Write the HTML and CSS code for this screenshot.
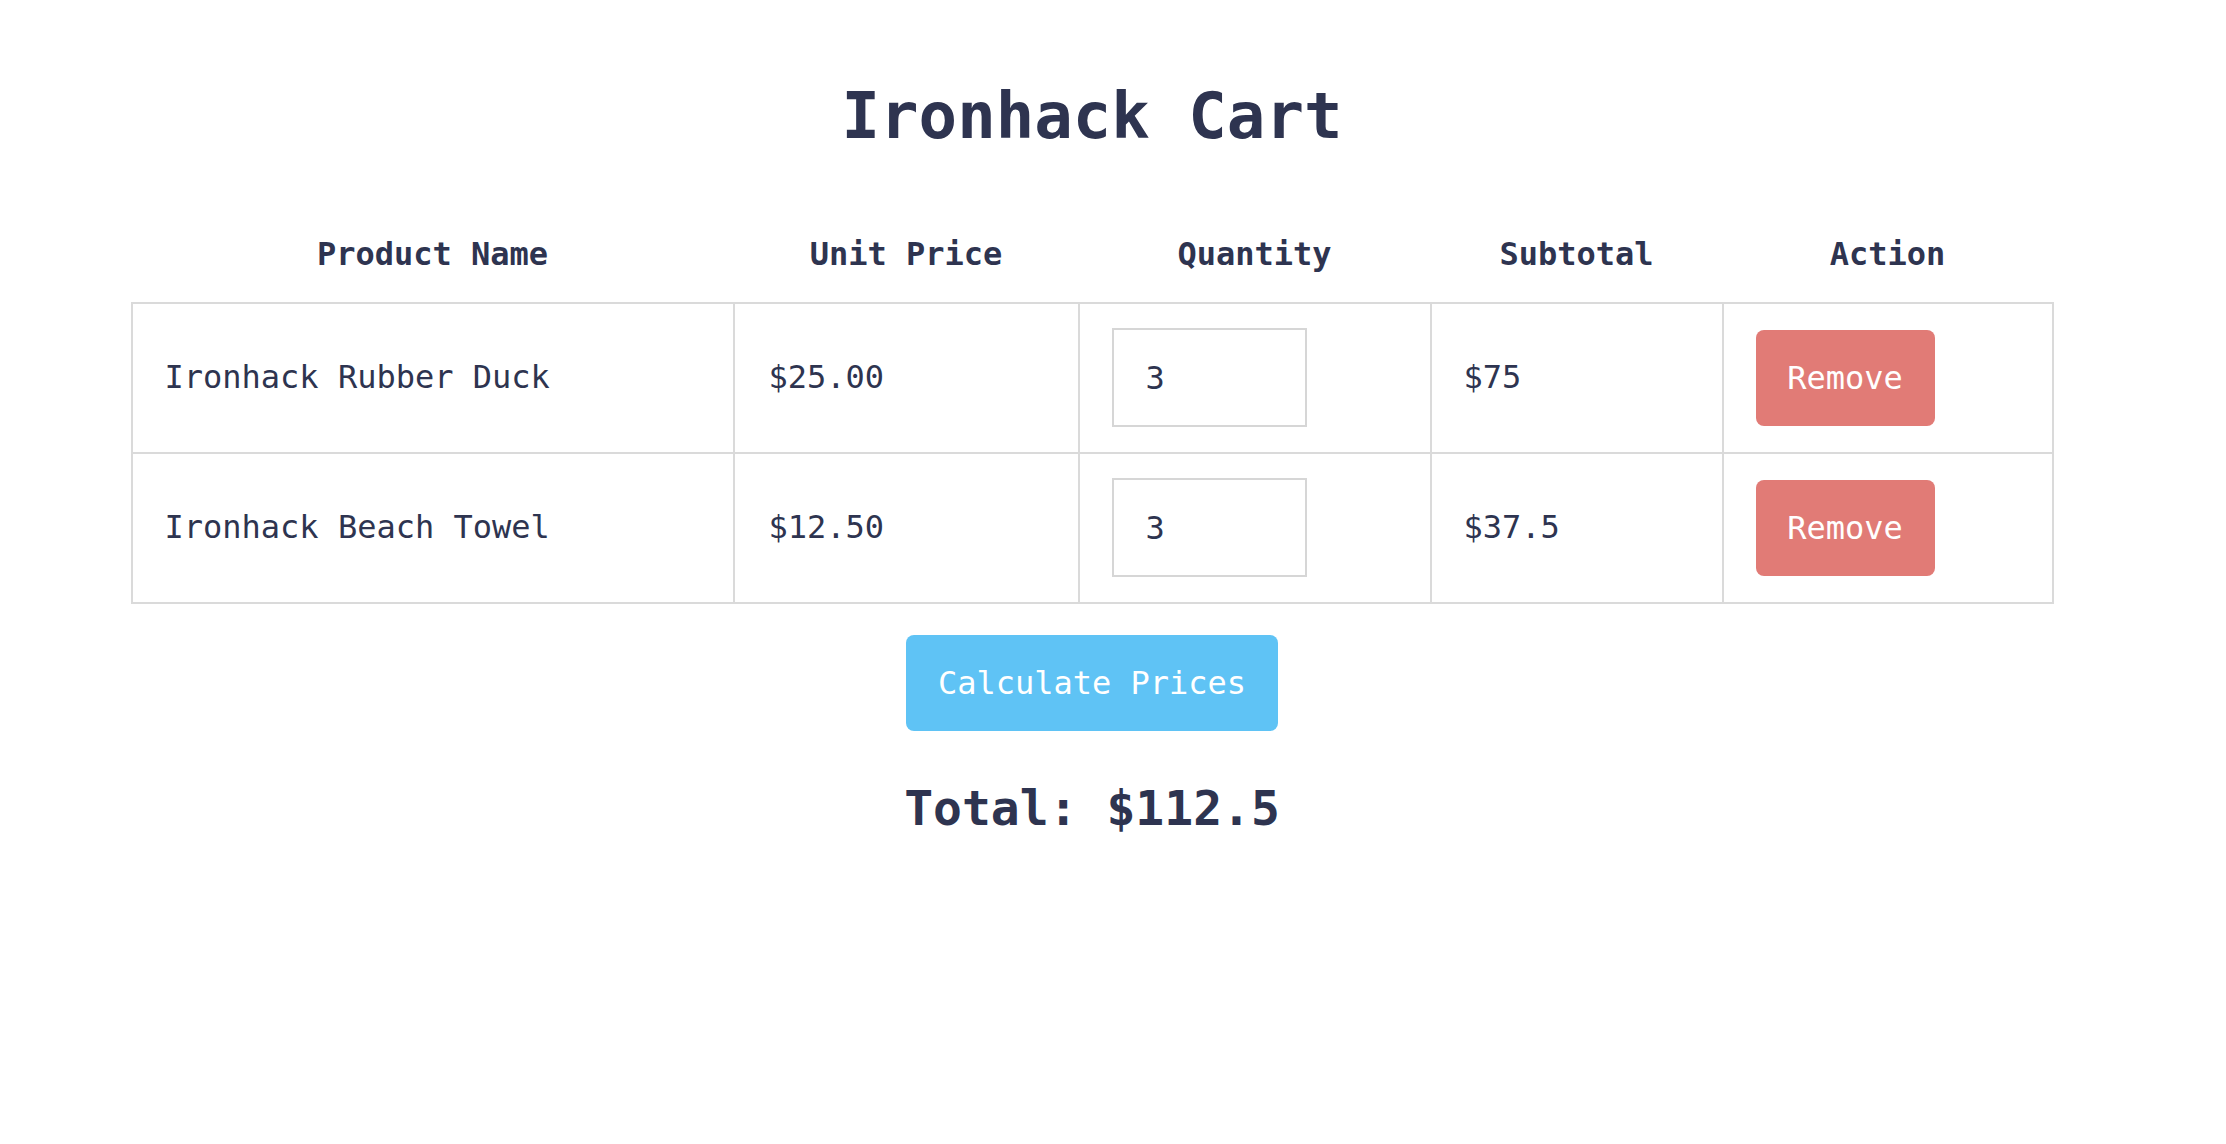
FILE: index.html
```html
<!DOCTYPE html>
<html lang="en">
<head>
<meta charset="utf-8">
<title>Ironhack Cart</title>
<link rel="stylesheet" href="styles.css">
</head>
<body>
<main class="page">
  <h1 class="title">Ironhack Cart</h1>
  <table class="cart">
    <colgroup>
      <col class="c-name">
      <col class="c-price">
      <col class="c-qty">
      <col class="c-sub">
      <col class="c-act">
    </colgroup>
    <thead>
      <tr>
        <th>Product Name</th>
        <th>Unit Price</th>
        <th>Quantity</th>
        <th>Subtotal</th>
        <th>Action</th>
      </tr>
    </thead>
    <tbody>
      <tr>
        <td>Ironhack Rubber Duck</td>
        <td>$25.00</td>
        <td><input class="qty" type="number" value="3"></td>
        <td>$75</td>
        <td><button class="btn btn-remove">Remove</button></td>
      </tr>
      <tr>
        <td>Ironhack Beach Towel</td>
        <td>$12.50</td>
        <td><input class="qty" type="number" value="3"></td>
        <td>$37.5</td>
        <td><button class="btn btn-remove">Remove</button></td>
      </tr>
    </tbody>
  </table>
  <button class="btn btn-calc">Calculate Prices</button>
  <h2 class="total">Total: $112.5</h2>
</main>
</body>
</html>
```

FILE: styles.css
```css
html, body {
  margin: 0;
  padding: 0;
  background: #ffffff;
}

body {
  font-family: "DejaVu Sans Mono", "Liberation Mono", monospace;
  font-size: 32px;
  color: #2e3450;
}

.page {
  width: 2184px;
  display: flex;
  flex-direction: column;
  align-items: center;
}

.title {
  margin: 79px 0 53px;
  font-size: 64px;
  line-height: 75px;
  font-weight: bold;
}

.cart {
  width: 1921px;
  table-layout: fixed;
  border-collapse: collapse;
}

.c-name { width: 602px; }
.c-price { width: 345px; }
.c-qty { width: 352px; }
.c-sub { width: 292px; }
.c-act { width: 330px; }

.cart th {
  padding: 29px 32px 29px;
  line-height: 37px;
  font-weight: bold;
  text-align: center;
}

.cart td {
  border: 2px solid #dadada;
  padding: 24px 32px 25px;
  line-height: 37px;
  text-align: left;
  vertical-align: middle;
}

.cart td:nth-child(2) {
  padding-left: 34px;
}

.qty {
  box-sizing: border-box;
  width: 195px;
  height: 99px;
  border: 2px solid #d6d6d6;
  padding: 0 0 0 32px;
  font-family: inherit;
  font-size: 32px;
  color: #2e3450;
  background: #ffffff;
  display: block;
  -moz-appearance: textfield;
}

.qty::-webkit-inner-spin-button,
.qty::-webkit-outer-spin-button {
  -webkit-appearance: none;
  margin: 0;
}

.btn {
  border: none;
  border-radius: 8px;
  color: #ffffff;
  font-family: inherit;
  font-size: 32px;
  cursor: pointer;
}

.btn-remove {
  display: block;
  width: 179px;
  height: 96px;
  background: #e17b76;
  padding: 0;
}

.btn-calc {
  margin-top: 31px;
  width: 372px;
  height: 96px;
  background: #5fc3f5;
  padding: 0;
}

.total {
  margin: 49px 0 0;
  font-size: 48px;
  line-height: 56px;
  font-weight: bold;
}
```
